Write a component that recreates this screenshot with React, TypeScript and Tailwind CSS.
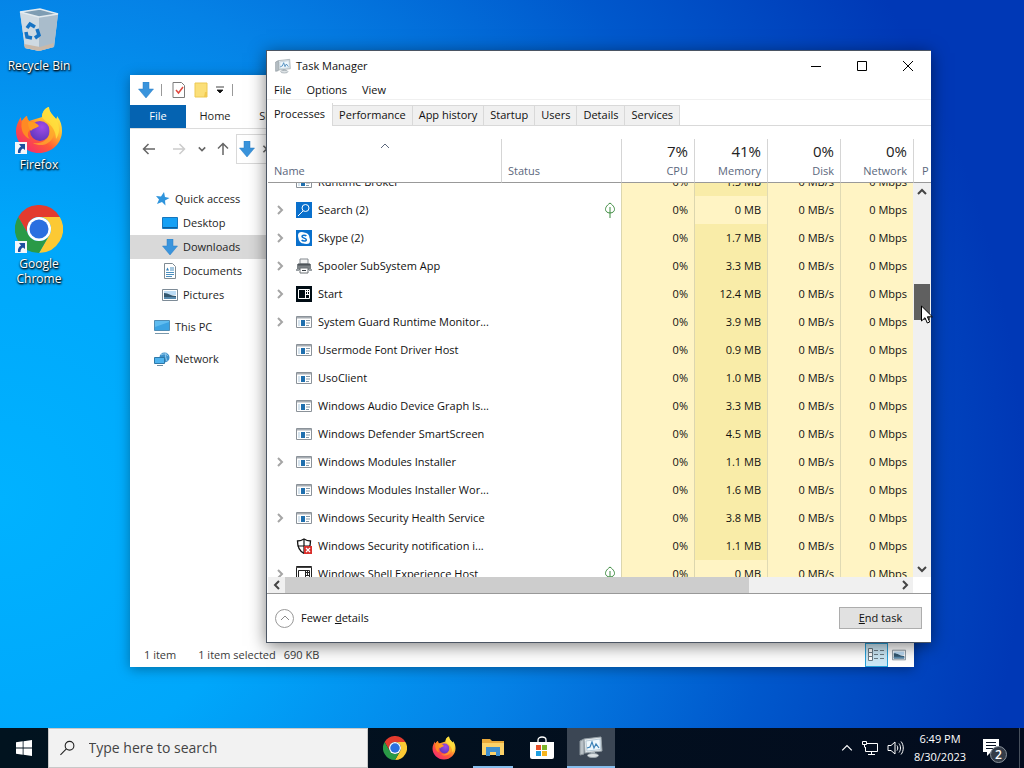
import { useEffect, useRef } from "react";
import type { ReactNode } from "react";

type ProcessIcon = "app" | "search" | "skype" | "printer" | "start" | "shell" | "shield";

interface Process {
  name: string;
  icon: ProcessIcon;
  memory: string;
  expandable?: boolean;
  suspended?: boolean;
}

const processes: Process[] = [
  { name: "Runtime Broker", icon: "app", memory: "1.5 MB" },
  { name: "Search (2)", icon: "search", memory: "0 MB", expandable: true, suspended: true },
  { name: "Skype (2)", icon: "skype", memory: "1.7 MB", expandable: true },
  { name: "Spooler SubSystem App", icon: "printer", memory: "3.3 MB", expandable: true },
  { name: "Start", icon: "start", memory: "12.4 MB", expandable: true },
  { name: "System Guard Runtime Monitor...", icon: "app", memory: "3.9 MB", expandable: true },
  { name: "Usermode Font Driver Host", icon: "app", memory: "0.9 MB" },
  { name: "UsoClient", icon: "app", memory: "1.0 MB" },
  { name: "Windows Audio Device Graph Is...", icon: "app", memory: "3.3 MB" },
  { name: "Windows Defender SmartScreen", icon: "app", memory: "4.5 MB" },
  { name: "Windows Modules Installer", icon: "app", memory: "1.1 MB", expandable: true },
  { name: "Windows Modules Installer Wor...", icon: "app", memory: "1.6 MB" },
  { name: "Windows Security Health Service", icon: "app", memory: "3.8 MB", expandable: true },
  { name: "Windows Security notification i...", icon: "shield", memory: "1.1 MB" },
  { name: "Windows Shell Experience Host", icon: "shell", memory: "0 MB", expandable: true, suspended: true },
];

const tabs = ["Processes", "Performance", "App history", "Startup", "Users", "Details", "Services"];

const usage = [
  { label: "CPU", value: "7%" },
  { label: "Memory", value: "41%" },
  { label: "Disk", value: "0%" },
  { label: "Network", value: "0%" },
];

const Chevron = ({ dir, className }: { dir: "up" | "down" | "left" | "right"; className: string }) => {
  const paths = { up: "M1 7l4-4 4 4", down: "M1 3l4 4 4-4", left: "M7 1L3 5l4 4", right: "M3 1l4 4-4 4" };
  return (
    <svg viewBox="0 0 10 10" className={className} fill="none" stroke="currentColor">
      <path d={paths[dir]} />
    </svg>
  );
};

const ChromeLogo = ({ className }: { className: string }) => (
  <svg viewBox="0 0 48 48" className={className}>
    <path d="M3.2 12A24 24 0 0 1 44.8 12H24A12 12 0 0 0 13.6 30Z" fill="#e33b2e" />
    <path d="M44.8 12A24 24 0 0 1 24 48L34.4 30A12 12 0 0 0 24 12Z" fill="#fcc934" />
    <path d="M24 48A24 24 0 0 1 3.2 12L13.6 30A12 12 0 0 0 34.4 30Z" fill="#2a9a47" />
    <circle cx="24" cy="24" r="12" fill="#fff" />
    <circle cx="24" cy="24" r="9.5" fill="#2a6fe0" />
  </svg>
);

const FirefoxLogo = ({ className, id }: { className: string; id: string }) => (
  <svg viewBox="0 0 48 48" className={className}>
    <defs>
      <linearGradient id={id + "-body"} x1="0.85" y1="0.1" x2="0.2" y2="0.9">
        <stop offset="0" stopColor="#fff14a" />
        <stop offset="0.35" stopColor="#ffb02e" />
        <stop offset="0.65" stopColor="#ff5a36" />
        <stop offset="1" stopColor="#f5306a" />
      </linearGradient>
      <radialGradient id={id + "-globe"} cx="0.6" cy="0.3" r="0.8">
        <stop offset="0" stopColor="#a04be8" />
        <stop offset="1" stopColor="#5a35b8" />
      </radialGradient>
    </defs>
    <path
      d="M27 11C27 6 30 2 34 1c0 5 4 8 7 12 1-1 1-2 1-3 4 5 5 10 5 15 0 12-10 22-23 22S1 37 1 25C1 19 4 14 6 11c0 2 0 3 1 4 1-2 3-4 5-5 0 2 1 4 2 5 4-1 9-3 13-4z"
      fill={"url(#" + id + "-body)"}
    />
    <path d="M7 15c2-3 4-5 5-5 0 2 1 4 2 5 4 0 7 1 9 4-4 2-7 3-9 6-2 3-1 6 1 8C8 31 5 22 7 15z" fill="#ff8a24" />
    <circle cx="25" cy="25" r="10" fill={"url(#" + id + "-globe)"} />
    <path d="M13 16c4-1 9 1 11 4-2 2-6 2-8 5 0 0-3-3-3-9z" fill="#ff9a22" />
    <path d="M33 14c7 5 8 13 4 19-4 6-12 8-19 4 9 1 15-3 16-9 1-5-1-9-1-14z" fill="#ffac2b" opacity="0.75" />
    <path d="M34 1c0 5 4 8 7 12 4 7 4 14 0 20 0-8-4-13-9-17-4-3-5-5-5-5 0-5 3-9 7-10z" fill="#ffdf3d" opacity="0.85" />
  </svg>
);

const RecycleBinIcon = () => (
  <svg viewBox="0 0 48 48" className="size-12">
    <path d="M5 5l20-3 18 5-4 33-15 4-14-3z" fill="#cdd7df" />
    <path d="M5 5l19 5 1 34-15-3z" fill="#cfdae2" />
    <path d="M24 10l19-3-4 33-15 4z" fill="#a9bccb" />
    <path d="M5 5l20-3 18 5-19 3z" fill="#7f9db3" stroke="#e3ebf0" strokeWidth="1.5" />
    <path d="M9 37l16 3 14-4-1 4-14 4-14-3z" fill="#c9b9aa" />
    <g fill="none" stroke="#1673c4" strokeWidth="3.5">
      <path d="M12 21l3-4 5 3" />
      <path d="M22 22l2 6-4 3" />
      <path d="M17 31l-5-1-1-5" />
    </g>
  </svg>
);

const ShortcutBadge = () => (
  <svg viewBox="0 0 12 12" className="absolute bottom-0 left-0 size-3">
    <path d="M0 0h12v12H0z" fill="#f4f6fa" />
    <path d="M4 2h6v6L8 6.5C6 7.5 5.5 9 5.5 11H3C2.5 8 4 5.5 6 4.5z" fill="#1d4fa0" />
  </svg>
);

const DownArrow = ({ className }: { className: string }) => (
  <svg viewBox="0 0 16 16" className={className}>
    <path d="M5 0h6v7h4.500L8 16 .5 7H5z" fill="#3a94dc" stroke="#2b7fc6" strokeWidth="0.5" />
  </svg>
);

const PictureIcon = ({ className }: { className: string }) => (
  <svg viewBox="0 0 16 16" className={className}>
    <path d="M.5 2.500h15v11H.5z" fill="#fff" stroke="#7d8b97" />
    <path d="M2 4h12v4H2z" fill="#bcdcf5" />
    <path d="M2 6c5 0 6 3 12 3v3H2z" fill="#33576f" />
    <path d="M2 10h12v2H2z" fill="#5689ad" />
  </svg>
);

const TaskManagerIcon = ({ className }: { className: string }) => (
  <svg viewBox="0 0 24 24" className={className}>
    <path d="M1 6l4-2v15l-4 1z" fill="#b9c1c7" stroke="#8b959c" />
    <path d="M5 4l17-2 1 14-17 2z" fill="#e3e8eb" stroke="#96a1a8" />
    <path d="M7 6l14-2 .5 10.500L8 16z" fill="#eef7fc" stroke="#a6bccb" strokeWidth="0.7" />
    <path d="M8 13l3-1 2-5 2 6 2-4 3 4" fill="none" stroke="#3d82b8" strokeWidth="1.200" />
    <path d="M12 17h4v3h-4z" fill="#a5afb6" />
    <ellipse cx="14" cy="20.500" rx="5.500" ry="2" fill="#dde2e5" stroke="#9aa4ab" />
  </svg>
);

const RowIcon = ({ icon }: { icon: ProcessIcon }) => (
  <svg viewBox="0 0 16 16" className="size-4 shrink-0">
    {icon === "app" && (
      <>
        <path d="M.5 2.500h15v11H.5z" fill="#fff" stroke="#8b9299" />
        <path d="M1 3h14v1.500H1z" fill="#a7adb3" />
        <path d="M2 6h2v6H2z" fill="#d6e4ee" />
        <path d="M5 6h4v6H5z" fill="#1f6fae" />
        <path d="M10 6.500h4M10 9h4M10 11.500h3" stroke="#8499a8" />
      </>
    )}
    {icon === "search" && (
      <>
        <path d="M0 0h16v16H0z" fill="#0a70cc" />
        <circle cx="9.500" cy="6" r="3.500" fill="none" stroke="#fff" />
        <path d="M7 9l-5 5" stroke="#fff" />
      </>
    )}
    {icon === "skype" && (
      <>
        <path d="M0 0h16v16H0z" fill="#0a70cc" />
        <circle cx="8" cy="8" r="5.500" fill="#fff" />
        <circle cx="5.500" cy="5.500" r="3.500" fill="#fff" />
        <circle cx="10.500" cy="10.500" r="3.500" fill="#fff" />
        <path d="M10.300 6C9.500 4.800 6 4.800 6 6.500S10.300 8 10.300 9.700 6.500 11.300 5.700 9.800" fill="none" stroke="#0a70cc" strokeWidth="1.500" />
      </>
    )}
    {icon === "printer" && (
      <>
        <path d="M4 1h8v5H4z" fill="#f2f3f4" stroke="#858b90" />
        <path d="M1 6h14v6H1z" fill="#7c8286" />
        <path d="M2 5.500h12v2H2z" fill="#4d5358" />
        <path d="M4 10h8v5H4z" fill="#fff" stroke="#6b7075" />
        <path d="M6 12.500h4" stroke="#3c4247" />
        <path d="M0 12h3M13 12h3" stroke="#9aa0a4" strokeWidth="2" />
      </>
    )}
    {icon === "start" && (
      <>
        <path d="M0 0h16v16H0z" fill="#000c14" />
        <path d="M2.500 3.500h11v9h-11z" fill="none" stroke="#fff" />
        <path d="M9.500 4v8M11.500 4v4M9.500 5.500H13M9.500 8.500H13" stroke="#fff" />
      </>
    )}
    {icon === "shell" && (
      <>
        <path d="M.5.5h15v15H.5z" fill="#fff" stroke="#222" />
        <path d="M0 1h16v1H0z" fill="#444" />
        <path d="M2.500 4.500h11v9h-11z" fill="none" stroke="#222" />
        <path d="M9.500 5v8M11.500 5v4M9.500 6.500H13M9.500 9.500H13" stroke="#222" />
      </>
    )}
    {icon === "shield" && (
      <>
        <path d="M8 1c2 1.300 4 2 6.500 2 0 6-1.500 10-6.500 12.300C3 13 1.500 9 1.500 3 4 3 6 2.300 8 1z" fill="#fff" stroke="#111" strokeWidth="1.300" />
        <path d="M8 1v14M1.500 8h13" stroke="#111" strokeWidth="1.200" />
        <path d="M8 8h8v8H8z" fill="#d9302c" />
        <path d="M10 10l4 4M14 10l-4 4" stroke="#fff" strokeWidth="1.200" />
      </>
    )}
  </svg>
);

const LeafIcon = () => (
  <svg viewBox="0 0 10 16" className="h-4 w-2.5" fill="none" stroke="#3b8a3e">
    <path d="M5 1C1 4 .5 6 .5 7.500S2 11 5 11s4.500-2 4.500-3.500S9 4 5 1zM5 5v11" />
  </svg>
);

const DesktopIcon = ({ label, shortcut, children }: { label: string; shortcut?: boolean; children: ReactNode }) => (
  <li className="h-[99px]">
    <button className="flex w-full flex-col items-center gap-[3px] text-xs leading-[15px] text-white [text-shadow:0_1px_2px_#000,1px_1px_2px_#000]">
      <span className="relative flex size-12 items-center justify-center">
        {children}
        {shortcut && <ShortcutBadge />}
      </span>
      <span className="w-16 whitespace-normal">{label}</span>
    </button>
  </li>
);

const SideItem = ({ label, icon, nested, active }: { label: string; icon: ReactNode; nested?: boolean; active?: boolean }) => (
  <li>
    <button className={`flex h-6 w-full items-center gap-[5px] ${nested ? "pl-8" : "pl-6"} ${active ? "bg-[#d9d9d9]" : ""}`}>
      {icon}
      {label}
    </button>
  </li>
);

const Explorer = () => (
  <section className="absolute top-[75px] right-[110px] bottom-[61px] left-[130px] flex flex-col bg-white text-[11px] text-[#1e1e1e] shadow-[0_2px_12px_rgba(0,0,0,0.35)]">
    <div className="flex h-[30px] items-center pl-2">
      <DownArrow className="size-4" />
      <span className="ml-[7px] h-3 w-px bg-[#999]" />
      <svg viewBox="0 0 14 16" className="ml-2.5 h-4 w-3.5">
        <path d="M1 .5h8.500l3 3v12H1z" fill="#fff" stroke="#7b7b7b" />
        <path d="M4 8l2.500 3L11 5" fill="none" stroke="#e0483e" strokeWidth="1.500" />
      </svg>
      <svg viewBox="0 0 14 16" className="ml-2 h-4 w-3.5">
        <path d="M1 1h12v14H1z" fill="#fbdf78" stroke="#edc953" />
        <path d="M11 10h2v5h-3z" fill="#f1c94f" />
      </svg>
      <svg viewBox="0 0 8 8" className="ml-2 size-2">
        <path d="M0 1h8M1 4h6L4 7z" stroke="#111" fill="#111" strokeWidth="0.8" />
      </svg>
      <span className="ml-2 h-3 w-px bg-[#999]" />
    </div>
    <div className="flex h-6 border-b border-[#dcdcdc]">
      <button className="w-14 bg-[#0563b1] text-white">File</button>
      <button className="w-[58px]">Home</button>
      <button className="w-[60px]">Share</button>
    </div>
    <div className="mt-0.5 flex h-9 items-center text-[#666]">
      <svg viewBox="0 0 14 12" className="ml-3 h-3 w-3.5" fill="none" stroke="#666" strokeWidth="1.500">
        <path d="M13 6H1.500M6.500 1l-5 5 5 5" />
      </svg>
      <svg viewBox="0 0 14 12" className="ml-4 h-3 w-3.5" fill="none" stroke="#ccc" strokeWidth="1.500">
        <path d="M1 6h11.500M7.500 1l5 5-5 5" />
      </svg>
      <Chevron dir="down" className="ml-3 size-2 stroke-2" />
      <svg viewBox="0 0 12 14" className="ml-[11px] h-3.5 w-3" fill="none" stroke="#666" strokeWidth="1.500">
        <path d="M6 13V1.500M1 6.500l5-5 5 5" />
      </svg>
      <div className="ml-[7px] flex h-[30px] flex-1 items-center gap-1.5 border border-[#d9d9d9] pl-0.5">
        <DownArrow className="size-4" />
        <Chevron dir="right" className="size-2 stroke-2" />
      </div>
    </div>
    <nav className="mt-5 flex-1">
      <ul className="w-[200px]">
        <SideItem
          label="Quick access"
          icon={
            <svg viewBox="0 0 16 16" className="size-4">
              <path d="M10 1l1 5 4.500 1L11 9.500l.5 5L8 11l-5 2 2-4.500L2 5l5 .5z" fill="#2f94dc" />
            </svg>
          }
        />
        <SideItem
          label="Desktop"
          nested
          icon={
            <svg viewBox="0 0 16 16" className="size-4">
              <path d="M.5 2.500h15v11H.5z" fill="#14a0f5" stroke="#1676bd" />
              <path d="M1 12.500h14" stroke="#0c5e9c" />
            </svg>
          }
        />
        <SideItem label="Downloads" nested active icon={<DownArrow className="size-4" />} />
        <SideItem
          label="Documents"
          nested
          icon={
            <svg viewBox="0 0 16 16" className="size-4">
              <path d="M2.500.5h8l3 3v12h-11z" fill="#fff" stroke="#7f8b93" />
              <path d="M8 5h4M8 7h4M4 9.500h8M4 11.500h8M4 13.500h6" stroke="#4b8fbf" />
              <path d="M4 7.500l1.500-3L7 7.500z" fill="#2f7fb8" />
            </svg>
          }
        />
        <SideItem label="Pictures" nested icon={<PictureIcon className="size-4" />} />
        <li className="h-2" />
        <SideItem
          label="This PC"
          icon={
            <svg viewBox="0 0 16 16" className="size-4">
              <path d="M.5 1.500h15v10H.5z" fill="#5fbcf0" stroke="#4f8db5" />
              <path d="M1 8l14-5v8H1z" fill="#3ba3e3" />
              <path d="M1 14.500h14" stroke="#7a98ab" />
            </svg>
          }
        />
        <li className="h-2" />
        <SideItem
          label="Network"
          icon={
            <svg viewBox="0 0 16 16" className="size-4">
              <circle cx="10.500" cy="6.500" r="5" fill="#3c8fc9" />
              <path d="M7 4c3-2 5-1 7 1M12 2c-1 3 0 6 1 8" stroke="#9bd0ef" fill="none" />
              <path d="M.5 6.500h10v6H.5z" fill="#4fb3ee" stroke="#2d78a8" />
              <path d="M3 14.500h6" stroke="#6d8b9e" />
            </svg>
          }
        />
      </ul>
    </nav>
    <footer className="flex h-6 items-center pl-3.5 text-[#3a3a3a]">
      <span>1 item</span>
      <span className="ml-[22px]">1 item selected</span>
      <span className="ml-2">690 KB</span>
      <button aria-label="Details view" className="ml-auto flex h-6 w-[23px] items-center justify-center border border-[#26a0da] bg-[#cbe8f6]">
        <svg viewBox="0 0 17 14" className="h-3.5 w-[17px]" fill="none" stroke="#6a7b85">
          <path d="M.5.5h4v4h-4zM.5 4.500h4v4h-4zM.5 8.500h4v4h-4z" fill="#fff" />
          <path d="M6 2.500h4M12 2.500h4M6 6.500h4M12 6.500h4M6 10.500h4M12 10.500h4" />
        </svg>
      </button>
      <button aria-label="Thumbnail view" className="mr-2 ml-1">
        <PictureIcon className="size-3.5" />
      </button>
    </footer>
  </section>
);

const ProcessTable = () => {
  const scroller = useRef<HTMLDivElement>(null);

  useEffect(() => {
    if (scroller.current) scroller.current.scrollTop = 15;
  }, []);

  return (
    <div ref={scroller} className="min-w-0 flex-1 overflow-auto [scrollbar-width:none]">
      <table className="w-full table-fixed border-separate border-spacing-0">
        <thead className="sticky top-0 z-10 bg-white text-[#5b677c]">
          <tr className="h-11 align-bottom">
            <th className="border-b border-[#999] p-0 px-1.5 pb-[3px] text-left font-normal">
              <div className="flex flex-col">
                <Chevron dir="up" className="mb-3 size-2.5 self-center" />
                <span className="leading-4">Name</span>
              </div>
            </th>
            <th className="w-[120px] border-b border-l border-b-[#999] border-l-[#d5d5d5] p-0 px-1.5 pb-[3px] text-left leading-4 font-normal">Status</th>
            {usage.map((column) => (
              <th key={column.label} className="w-[73px] border-b border-l border-b-[#999] border-l-[#d5d5d5] p-0 pr-1.5 pb-[3px] text-right font-normal">
                <div className="text-[15px] leading-6 text-[#222]">{column.value}</div>
                <div className="leading-4">{column.label}</div>
              </th>
            ))}
          </tr>
        </thead>
        <tbody>
          {processes.map((process) => (
            <tr key={process.name} className="h-7">
              <td className="p-0">
                <div className="flex items-center pl-[7px] whitespace-nowrap">
                  <span className="w-[21px] shrink-0">
                    {process.expandable && <Chevron dir="right" className="size-2.5 stroke-2 text-[#a5a5a5]" />}
                  </span>
                  <RowIcon icon={process.icon} />
                  <span className="ml-1.5">{process.name}</span>
                </div>
              </td>
              <td className="p-0">
                <div className="flex justify-end pr-1.5">{process.suspended && <LeafIcon />}</div>
              </td>
              <td className="border-l border-[#dcd6ae] bg-[#fff4c4] p-0 pr-1.5 text-right">0%</td>
              <td className={`border-l border-[#dcd6ae] p-0 pr-1.5 text-right ${process.memory === "0 MB" ? "bg-[#fff4c4]" : "bg-[#f9eca8]"}`}>
                {process.memory}
              </td>
              <td className="border-l border-[#e0dab4] bg-[#fff4c4] p-0 pr-1.5 text-right">0 MB/s</td>
              <td className="border-l border-[#e0dab4] bg-[#fff4c4] p-0 pr-1.5 text-right">0 Mbps</td>
            </tr>
          ))}
        </tbody>
      </table>
    </div>
  );
};

const TaskManager = () => (
  <section className="absolute top-[50px] right-[93px] bottom-[85px] left-[266px] flex flex-col border border-r-0 border-[#4b5563] bg-white text-[11px] text-[#111] shadow-[0_3px_16px_rgba(0,0,0,0.5)]">
    <header className="flex h-[30px] shrink-0 items-center pl-2">
      <TaskManagerIcon className="size-4" />
      <h1 className="ml-[5px]">Task Manager</h1>
      <div className="ml-auto flex">
        <button aria-label="Minimize" className="flex h-7 w-[46px] items-center justify-center">
          <svg viewBox="0 0 10 10" className="size-2.5" stroke="#000">
            <path d="M0 5.500h10" />
          </svg>
        </button>
        <button aria-label="Maximize" className="flex h-7 w-[46px] items-center justify-center">
          <svg viewBox="0 0 10 10" className="size-2.5" stroke="#000" fill="none">
            <path d="M.5.5h9v9h-9z" />
          </svg>
        </button>
        <button aria-label="Close" className="flex h-7 w-[46px] items-center justify-center">
          <svg viewBox="0 0 10 10" className="size-2.5" stroke="#000">
            <path d="M0 0l10 10M10 0L0 10" />
          </svg>
        </button>
      </div>
    </header>
    <div className="flex h-[19px] shrink-0 items-center gap-[15px] border-b border-[#f0f0f0] pl-[7px]">
      <button>File</button>
      <button>Options</button>
      <button>View</button>
    </div>
    <div role="tablist" className="mt-[3px] flex h-[23px] shrink-0 items-end border-b border-[#d9d9d9]">
      {tabs.map((tab, index) => (
        <button
          key={tab}
          role="tab"
          aria-selected={index === 0}
          className={
            index === 0
              ? "-mb-px h-[23px] border-r border-[#d9d9d9] bg-white px-[7px]"
              : "h-5 border-t border-r border-[#d9d9d9] bg-[#f0f0f0] px-1.5"
          }
        >
          {tab}
        </button>
      ))}
    </div>
    <div className="mt-[13px] flex min-h-0 flex-1 pl-px">
      <ProcessTable />
      <div className="flex w-[18px] flex-col">
        <div className="flex h-11 shrink-0 items-end overflow-hidden border-b border-l border-b-[#999] border-l-[#d5d5d5] pb-[3px] pl-2 leading-4 text-[#5b677c]">P</div>
        <div className="flex flex-1 flex-col items-center bg-[#f0f0f0] text-[#444]">
          <button aria-label="Scroll up" className="flex h-[17px] items-center">
            <Chevron dir="up" className="size-2.5 stroke-2" />
          </button>
          <div className="mt-[84px] h-9 w-4 bg-[#606060]" />
          <button aria-label="Scroll down" className="mt-auto flex h-[17px] items-center">
            <Chevron dir="down" className="size-2.5 stroke-2" />
          </button>
        </div>
      </div>
    </div>
    <div className="flex h-[17px] shrink-0 border-b border-[#999] pr-[18px] pl-px text-[#444]">
      <div className="flex flex-1 items-center bg-[#f0f0f0]">
        <button aria-label="Scroll left" className="flex w-[17px] justify-center">
          <Chevron dir="left" className="size-2.5 stroke-2" />
        </button>
        <div className="h-full flex-1">
          <div className="h-full w-[76%] bg-[#cdcdcd]" />
        </div>
        <button aria-label="Scroll right" className="flex w-[17px] justify-center">
          <Chevron dir="right" className="size-2.5 stroke-2" />
        </button>
      </div>
    </div>
    <footer className="flex h-12 shrink-0 items-center justify-between pr-[9px] pl-2">
      <button className="flex items-center gap-[7px]">
        <span className="flex size-[19px] items-center justify-center rounded-full border border-[#999]">
          <Chevron dir="up" className="size-2.5 text-[#888]" />
        </span>
        <span>
          Fewer <u>d</u>etails
        </span>
      </button>
      <button className="h-[22px] w-[83px] border border-[#adadad] bg-[#e1e1e1]">
        <u>E</u>nd task
      </button>
    </footer>
  </section>
);

const TaskButton = ({ label, running, active, children }: { label: string; running?: boolean; active?: boolean; children: ReactNode }) => (
  <button aria-label={label} className={`flex h-10 w-12 flex-col items-center ${active ? "bg-[#3b4654]" : ""}`}>
    <span className="flex flex-1 items-center justify-center">{children}</span>
    {(running || active) && <span className={`h-0.5 bg-[#86bdec] ${active ? "w-12" : "w-10"}`} />}
  </button>
);

const Taskbar = () => (
  <footer className="flex h-10 shrink-0 items-center bg-linear-to-r from-[#01131f] to-[#030c1e] text-white">
    <button aria-label="Start" className="flex h-10 w-12 items-center justify-center">
      <svg viewBox="0 0 16 16" className="size-4" fill="#fff">
        <path d="M0 2.200l6.700-.9v6.300H0zM7.500 1.200L16 0v7.600H7.500zM0 8.400h6.700v6.300L0 13.800zM7.500 8.400H16V16l-8.500-1.200z" />
      </svg>
    </button>
    <label className="flex h-10 w-80 items-center border border-[#c8c8c8] bg-[#f2f2f2] pl-[11px]">
      <svg viewBox="0 0 16 16" className="size-4" fill="none" stroke="#222" strokeWidth="1.200">
        <circle cx="10.500" cy="5.500" r="4.800" />
        <path d="M7 9L.5 15.500" />
      </svg>
      <input aria-label="Type here to search" placeholder="Type here to search" className="ml-3.5 w-full bg-transparent text-sm outline-none placeholder:text-[#444]" />
    </label>
    <div className="ml-[3px] flex gap-px">
      <TaskButton label="Google Chrome">
        <ChromeLogo className="size-6" />
      </TaskButton>
      <TaskButton label="Firefox">
        <FirefoxLogo id="ff-task" className="size-6" />
      </TaskButton>
      <TaskButton label="File Explorer" running>
        <svg viewBox="0 0 24 24" className="size-6">
          <path d="M1 4h8l2 2h12v14H1z" fill="#e9a93a" />
          <path d="M1 8h22v12H1z" fill="#fcd269" />
          <path d="M5 12h14v9h-4v-4H9v4H5z" fill="#3e8fcf" />
        </svg>
      </TaskButton>
      <TaskButton label="Microsoft Store">
        <svg viewBox="0 0 24 24" className="size-6">
          <path d="M8 7V4c0-4 8-4 8 0v3" fill="none" stroke="#fff" strokeWidth="1.300" />
          <path d="M0 6h24v15a2 2 0 0 1-2 2H2a2 2 0 0 1-2-2z" fill="#fff" />
          <path d="M6 9h5v5H6z" fill="#e8502a" />
          <path d="M12 9h5v5h-5z" fill="#7db52c" />
          <path d="M6 15h5v5H6z" fill="#1f9fe0" />
          <path d="M12 15h5v5h-5z" fill="#f6b51e" />
        </svg>
      </TaskButton>
      <TaskButton label="Task Manager" active>
        <TaskManagerIcon className="size-6" />
      </TaskButton>
    </div>
    <div className="ml-auto flex h-10 items-center">
      <button aria-label="Show hidden icons">
        <Chevron dir="up" className="size-3" />
      </button>
      <svg viewBox="0 0 18 16" className="ml-2 h-4 w-[18px]" fill="none" stroke="#fff">
        <path d="M6 3.500h10.500v8h-12V7M10.500 11.500v3M7 14.500h7M1.500 1.500h4v3h-4zM3.500 4.500v3" />
      </svg>
      <svg viewBox="0 0 18 16" className="ml-2 h-4 w-[18px]" fill="none" stroke="#fff">
        <path d="M1 5.500h3l4-3.500v12l-4-3.500H1zM10 5.500c1 1.500 1 3.500 0 5M12 3.500c2 2.500 2 6.500 0 9M14 1.500c3 3.500 3 9.500 0 13" />
      </svg>
      <div className="w-[70px] text-center text-[11px] leading-[18px]">
        <div>6:49 PM</div>
        <div>8/30/2023</div>
      </div>
      <button aria-label="Notifications" className="relative ml-2 size-6">
        <svg viewBox="0 0 24 24" className="size-6">
          <path d="M0 3h16v13H8l-4 4v-4H0z" fill="#fff" />
          <path d="M3 6.500h10M3 9.500h10M3 12.500h7" stroke="#0a1426" />
        </svg>
        <span className="absolute top-[10px] left-[7px] flex size-[17px] items-center justify-center rounded-full border border-[#8a929b] bg-[#343c48] text-xs font-semibold">2</span>
      </button>
      <span className="mr-1 ml-3 h-10 w-px bg-[#47505c]" />
    </div>
  </footer>
);

export default function App() {
  return (
    <div className="flex h-screen flex-col overflow-hidden bg-[radial-gradient(ellipse_100%_130%_at_0%_65%,#00b2ff_0%,#00a7fb_27%,#0582e6_52%,#0058cc_76%,#0038b6_100%)] font-['Open_Sans','Noto_Sans',sans-serif]">
      <main className="relative flex-1">
        <ul className="w-[78px] pt-[7px]">
          <DesktopIcon label="Recycle Bin">
            <RecycleBinIcon />
          </DesktopIcon>
          <DesktopIcon label="Firefox" shortcut>
            <FirefoxLogo id="ff-desk" className="size-12" />
          </DesktopIcon>
          <DesktopIcon label="Google Chrome" shortcut>
            <ChromeLogo className="size-12" />
          </DesktopIcon>
        </ul>
        <Explorer />
        <TaskManager />
        <svg viewBox="0 0 12 19" className="absolute top-[305px] right-[91px] h-[19px] w-3">
          <path d="M.5 1v15l3.500-3.300 2.300 5.300 2.400-1-2.300-5.200h5z" fill="#fff" stroke="#000" />
        </svg>
      </main>
      <Taskbar />
    </div>
  );
}
